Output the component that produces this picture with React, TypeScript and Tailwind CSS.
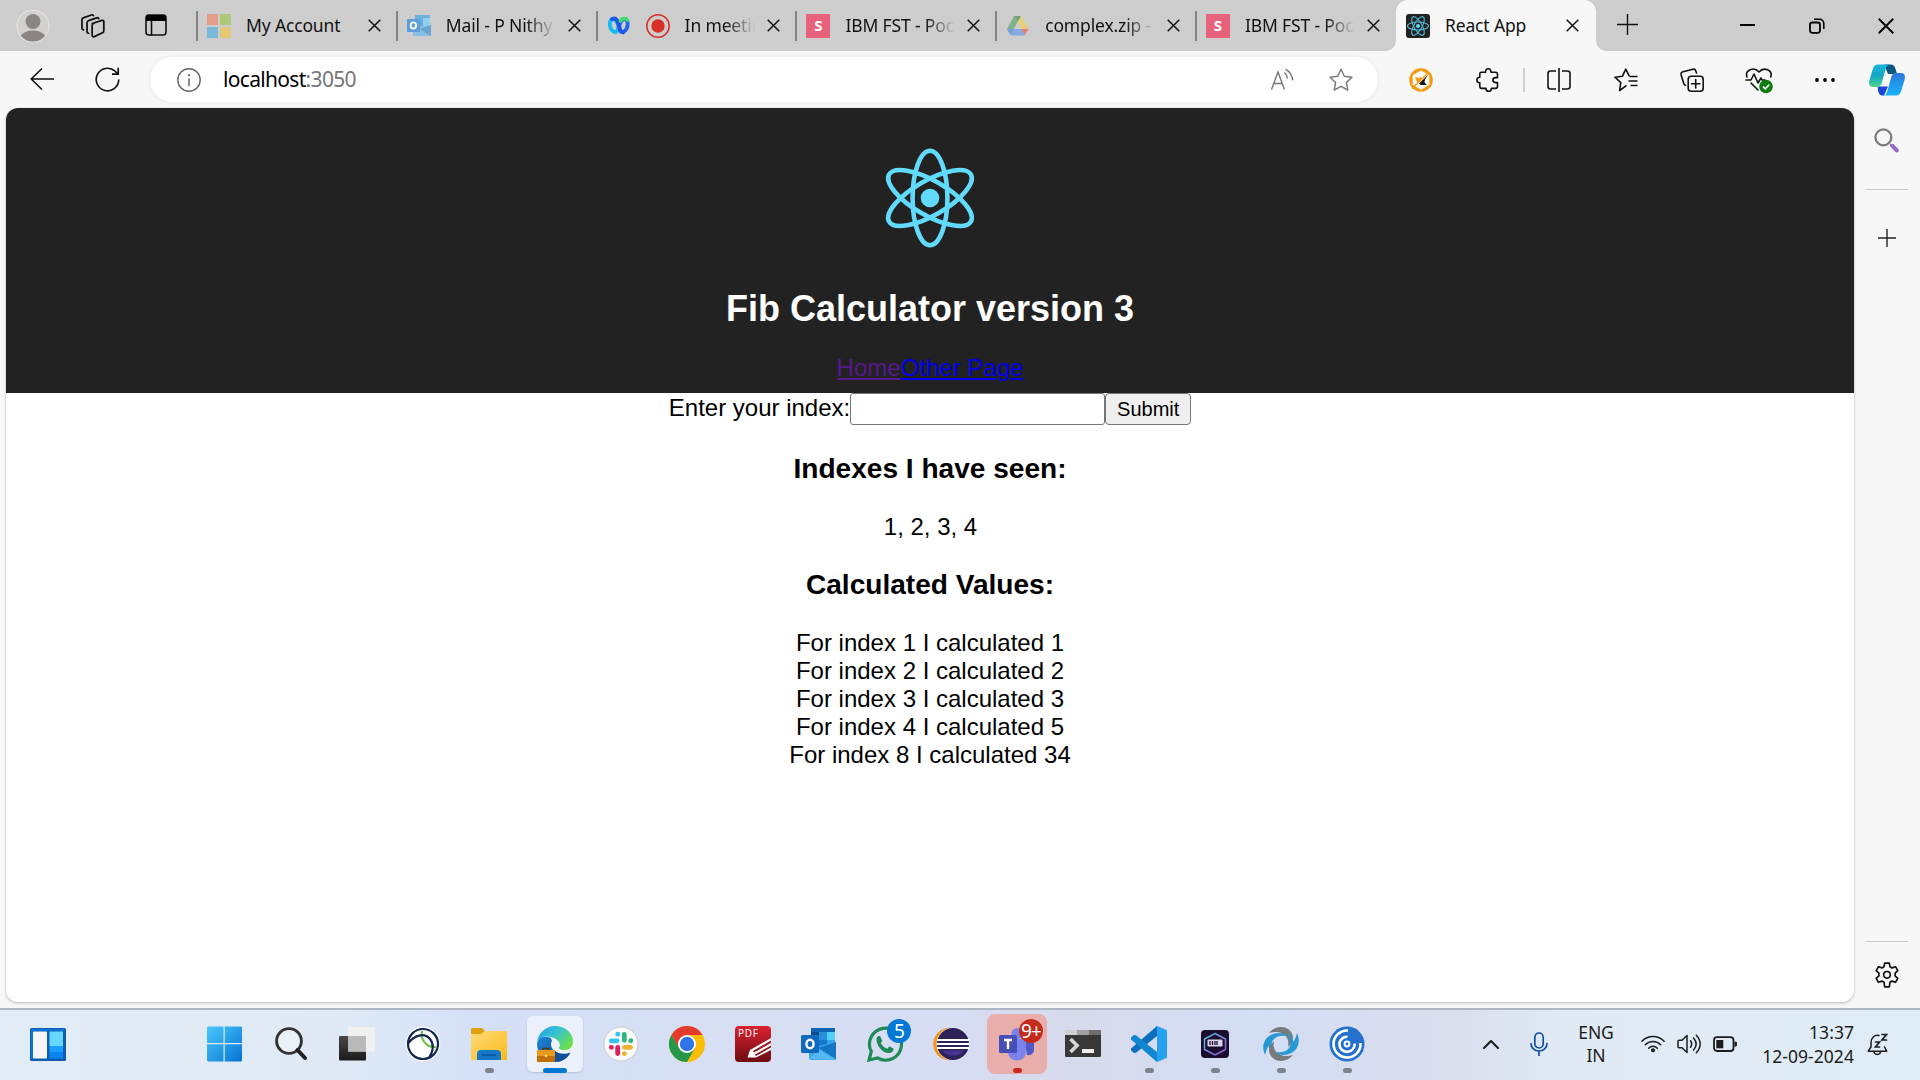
import React from "react";

const ui = { fill: "none", stroke: "#111", strokeWidth: 1.6, strokeLinecap: "round", strokeLinejoin: "round" } as const;

function Svg({ w = 24, h = w, box, children, ...rest }: any) {
  return (
    <svg width={w} height={h} viewBox={box || "0 0 24 24"} className="block shrink-0" {...rest}>
      {children}
    </svg>
  );
}

/* ---------- browser tab icons ---------- */

const MicrosoftIcon = () => (
  <Svg>
    <path d="M0 0h11v11H0z" fill="#e29c88" />
    <path d="M13 0h11v11H13z" fill="#adc776" />
    <path d="M0 13h11v11H0z" fill="#79badb" />
    <path d="M13 13h11v11H13z" fill="#e5c576" />
  </Svg>
);

const OutlookTabIcon = () => (
  <Svg>
    <path d="M8 1h15v7H8z" fill="#6fb1dc" />
    <path d="M8 6h8v7H8z" fill="#6ba6d6" />
    <path d="M16 4h7v9h-7z" fill="#8fd0ee" />
    <path d="M6 12l18 0v10H6z" fill="#86bfe4" />
    <path d="M24 11v11L12 15z" fill="#6aa5d2" />
    <rect y="5" width="13" height="13" rx="1" fill="#5b9fd6" />
    <ellipse cx="6.4" cy="11.4" rx="2.7" ry="3.1" fill="none" stroke="#fff" strokeWidth="1.8" />
  </Svg>
);

const WebexIcon = () => (
  <Svg>
    <ellipse cx="7" cy="11.5" rx="4" ry="6.6" transform="rotate(-14 7 11.5)" fill="none" stroke="#16b9f2" strokeWidth="3.8" />
    <ellipse cx="16.5" cy="11.5" rx="4" ry="6.6" transform="rotate(14 16.5 11.5)" fill="none" stroke="#2463ee" strokeWidth="3.8" />
    <path d="M5 5c5-2 6 3 7 7 1 4 2 6 4 6.500" fill="none" stroke="#1d55e6" strokeWidth="3.8" strokeLinecap="round" />
    <path d="M13.500 7c1-2.500 5-3.500 7-1" fill="none" stroke="#3fdc6b" strokeWidth="3.6" strokeLinecap="round" />
  </Svg>
);

const RecordIcon = () => (
  <Svg>
    <circle cx="12" cy="12" r="11.200" fill="none" stroke="#d93025" strokeWidth="1.5" />
    <circle cx="12" cy="12" r="6.700" fill="#d93025" />
  </Svg>
);

const SIcon = () => (
  <span className="flex size-6 items-center justify-center bg-[#e8627c] font-['Open_Sans',sans-serif] text-[15px] leading-none font-bold text-white">S</span>
);

const DriveIcon = () => (
  <Svg>
    <path d="M8 2h7l-3.500 6.200-6.500 13L1 15z" fill="#7fb38c" />
    <path d="M8 2h7l7.500 13h-7.200z" fill="#e6cf7c" />
    <path d="M8 2h7l-3.500 6z" fill="#6fa27c" />
    <path d="M8.400 15h14.100l-4 6.500H5z" fill="#88a9e2" />
    <path d="M15.300 15h7.200l-3.800 6z" fill="#df7f78" />
    <path d="M8.400 15L1 15l4 6.500z" fill="#799fe0" />
    <path d="M11.500 8.200L15.300 15H7.800z" fill="#cdcdcd" />
  </Svg>
);

const ReactTabIcon = () => (
  <Svg>
    <rect width="24" height="24" rx="3" fill="#222" />
    <g fill="none" stroke="#53b9d6" strokeWidth="1.1">
      <ellipse cx="12" cy="12" rx="10.500" ry="4" />
      <ellipse cx="12" cy="12" rx="10.500" ry="4" transform="rotate(60 12 12)" />
      <ellipse cx="12" cy="12" rx="10.500" ry="4" transform="rotate(120 12 12)" />
    </g>
    <circle cx="12" cy="12" r="2" fill="#61dafb" />
  </Svg>
);

const CloseX = ({ s = 13 }: { s?: number }) => (
  <Svg w={s} box="0 0 13 13">
    <path d="M.7.7l11.600 11.600M12.300.7L.7 12.300" stroke="#111" strokeWidth="1.5" fill="none" />
  </Svg>
);

type TabData = { title: string; icons: React.ReactNode[]; fade?: boolean };

const tabs: TabData[] = [
  { title: "My Account", icons: [<MicrosoftIcon key="a" />] },
  { title: "Mail - P Nithy", icons: [<OutlookTabIcon key="a" />], fade: true },
  { title: "In meetin", icons: [<WebexIcon key="a" />, <RecordIcon key="b" />], fade: true },
  { title: "IBM FST - Poc", icons: [<SIcon key="a" />], fade: true },
  { title: "complex.zip -", icons: [<DriveIcon key="a" />], fade: true },
  { title: "IBM FST - Poc", icons: [<SIcon key="a" />], fade: true },
];

function Tab({ title, icons, fade }: TabData) {
  return (
    <div className="flex h-[51px] w-[199.800px] shrink-0 items-center">
      <div className="h-[30px] w-[2px] bg-[#858585]" />
      <div className="ml-[9px] flex shrink-0 gap-[15px]">{icons}</div>
      <div
        className={`ml-[15px] h-[30px] min-w-0 flex-1 text-[17.500px] leading-[28px] tracking-[-0.15px] whitespace-nowrap ${
          fade ? "[mask-image:linear-gradient(to_right,black_calc(100%_-_30px),transparent)]" : ""
        }`}
      >
        {title}
      </div>
      <div className="ml-[12px] flex w-[28px] shrink-0">
        <CloseX />
      </div>
    </div>
  );
}

function TabStrip() {
  return (
    <div className="flex h-[51px] items-center bg-[#cdcdcd]">
      <div className="flex w-[66px] justify-center">
        <Svg w={34} box="0 0 34 34">
          <defs>
            <clipPath id="avatar">
              <circle cx="17" cy="17" r="15.500" />
            </clipPath>
          </defs>
          <circle cx="17" cy="17" r="16" fill="#d3d1cf" stroke="#e4e2e0" strokeWidth="1.2" />
          <g clipPath="url(#avatar)" fill="#8a8582">
            <circle cx="17" cy="12.500" r="7.500" />
            <ellipse cx="17" cy="30" rx="13" ry="8.500" />
          </g>
        </Svg>
      </div>
      <div className="flex w-[54px] justify-center">
        <Svg w={26}>
          <g {...ui}>
            <path d="M11.300 9.700l8.900-2.900c1-.3 1.800.3 1.800 1.300v8.200c0 .9-.4 1.500-1.200 1.900l-7.600 3.600c-1.100.5-2-.1-2-1.200v-9c0-.9.500-1.600 1.300-1.900z" />
            <path d="M8 18.800c-1.100 0-1.500-.5-1.500-1.500V8.900c0-.9.500-1.500 1.300-1.800l7.700-2.600c.8-.3 1.500 0 1.800.7" />
            <path d="M3.300 15.500c-1 0-1.500-.5-1.500-1.400V6.300c0-.9.400-1.500 1.200-1.800l7.500-2.700c.8-.3 1.500 0 1.900.6" />
          </g>
        </Svg>
      </div>
      <div className="flex w-[72px] justify-center pb-px">
        <Svg w={22} box="0 0 22 22">
          <rect x="1" y="1" width="20" height="20" rx="3" {...ui} />
          <path d="M1 7V4a3 3 0 013-3h14a3 3 0 013 3v3z" fill="#000" />
          <path d="M6.500 7v14" {...ui} />
        </Svg>
      </div>
      <div className="ml-[4px] flex">
        {tabs.map((t, i) => (
          <Tab key={i} {...t} />
        ))}
      </div>
      <div className="relative ml-[1.200px] flex h-[51px] w-[200px] shrink-0 items-center rounded-t-[12px] bg-[#f7f7f7] before:absolute before:bottom-0 before:-left-[10px] before:size-[10px] before:bg-[radial-gradient(circle_at_0_0,transparent_9.500px,#f7f7f7_10px)] after:absolute after:-right-[10px] after:bottom-0 after:size-[10px] after:bg-[radial-gradient(circle_at_100%_0,transparent_9.500px,#f7f7f7_10px)]">
        <div className="ml-[10px]">
          <ReactTabIcon />
        </div>
        <div className="ml-[15px] h-[30px] w-[115px] text-[17.500px] leading-[28px] tracking-[-0.15px] whitespace-nowrap">React App</div>
        <div className="ml-[6px]">
          <CloseX />
        </div>
      </div>
      <div className="flex w-[64px] justify-center pb-[2px]">
        <Svg w={21} box="0 0 21 21">
          <path d="M10.500 0v21M0 10.500h21" stroke="#111" strokeWidth="1.4" />
        </Svg>
      </div>
      <div className="ml-auto flex items-center">
        <div className="flex w-[69px] justify-center">
          <div className="mb-px h-[2px] w-[15px] bg-black" />
        </div>
        <div className="flex w-[69px] justify-center">
          <Svg w={16} box="0 0 16 16">
            <rect x="1" y="4.500" width="10" height="10.300" rx="2.200" fill="none" stroke="#000" strokeWidth="1.800" />
            <path d="M5 1.300h5.500a4.300 4.300 0 014.300 4.300V11" fill="none" stroke="#000" strokeWidth="1.600" />
          </Svg>
        </div>
        <div className="flex w-[69px] justify-center">
          <Svg w={16} box="0 0 13 13">
            <path d="M.6.6l11.800 11.800M12.400.6L.6 12.400" stroke="#000" strokeWidth="1.500" />
          </Svg>
        </div>
      </div>
    </div>
  );
}

/* ---------- toolbar ---------- */

function Toolbar() {
  return (
    <div className="flex h-[57px] items-center bg-[#f7f7f7] pl-[9px]">
      <div className="flex w-[66px] justify-center pb-px">
        <Svg>
          <path d="M12 1.500L1.200 12 12 22.500M1.200 12H24" {...ui} strokeLinecap="butt" />
        </Svg>
      </div>
      <div className="flex w-[65px] justify-center pb-px">
        <Svg w={25}>
          <path d="M22.800 12A10.800 10.800 0 1119 3.800l3 2.700M22.300.8v6h-6" {...ui} strokeLinecap="butt" strokeLinejoin="miter" />
        </Svg>
      </div>
      <div className="ml-[10px] flex h-[45px] w-[1228px] shrink-0 items-center rounded-full bg-white pl-[27px] shadow-[0_0_5px_rgba(0,0,0,0.08)]">
        <Svg>
          <circle cx="12" cy="12" r="11.200" fill="none" stroke="#666" strokeWidth="1.4" />
          <path d="M12 10.500v7.500" stroke="#666" strokeWidth="1.500" />
          <circle cx="12" cy="7.200" r="1.100" fill="#666" />
        </Svg>
        <div className="mb-px ml-[22px] text-[21px] leading-[30px] tracking-[-0.680px] text-black">
          localhost<span className="text-[#767676]">:3050</span>
        </div>
        <div className="ml-auto flex items-center gap-[35px] pr-[25px]">
          <Svg>
            <g fill="none" stroke="#767676" strokeWidth="1.400">
              <path d="M1.500 21.500L8 4l6.500 17.500M3.800 15.500h8.400" />
              <path d="M14.500 4.500c1.700 1.600 2.700 3.800 2.900 6.300M15.500 1.200c4 2.200 6.700 6.400 7.200 11.300" />
            </g>
          </Svg>
          <Svg>
            <path d="M12 1.200l3.300 7 7.700 1-5.600 5.300 1.400 7.600-6.800-3.700-6.800 3.700 1.400-7.600L1 9.200l7.700-1z" fill="none" stroke="#767676" strokeWidth="1.400" strokeLinejoin="round" />
          </Svg>
        </div>
      </div>
      <div className="ml-[10px] flex w-[66px] justify-center">
        <Svg>
          <circle cx="12" cy="12" r="11.800" fill="#f59a0c" />
          <path d="M12 2.600l8.300 4.600v9.600L12 21.800l-8.300-5V7.200z" fill="#fff" />
          <path d="M6 9l3.500 1L12 9l1 2-4 4-1.500-2z" fill="#f59a0c" />
          <path d="M3 20.500L18.500 5.500" stroke="#f59a0c" strokeWidth="1.400" />
          <path d="M19.500 6.500L10 15.500l2 1.500h6l-2.500-2.500.5-3z" fill="#111" />
        </Svg>
      </div>
      <div className="flex w-[67px] justify-center">
        <Svg>
          <path
            d="M5.300 4.200h4.200C9.300 2 10.600.8 12.200.8s3 1.200 2.700 3.400h4.500c1.200 0 2.100.9 2.100 2.100v3.300h-1.700c-1.800 0-2.900 1.100-2.900 2.500s1.100 2.500 2.900 2.500h1.700v3.700c0 1.200-.9 2.100-2.100 2.100h-4c0 1.800-1.200 2.800-2.700 2.800s-2.700-1-2.700-2.800H5.900c-1.200 0-2.100-.9-2.100-2.100v-3.600C2 14.700.9 13.500.9 12s1.100-2.700 2.900-2.700V5.700c0-.9.600-1.500 1.500-1.500z"
            {...ui}
          />
        </Svg>
      </div>
      <div className="ml-[2px] h-6 w-[2px] bg-[#d0d0d0]" />
      <div className="ml-px flex w-[66px] justify-center">
        <Svg>
          <g {...ui} strokeLinecap="butt">
            <path d="M12 0v24M9 3H3.500C2 3 1 4 1 5.500v13C1 20 2 21 3.500 21H9M15 3h5.500C22 3 23 4 23 5.500v13c0 1.500-1 2.500-2.500 2.500H15" />
          </g>
        </Svg>
      </div>
      <div className="flex w-[67px] justify-center">
        <Svg>
          <g {...ui}>
            <path d="M12 17.800L5.600 22.500l1.200-7.900L.9 9.200l7.600-1L11.800 1.200l3.300 6.600" />
            <path d="M15.500 8.500h8M14.500 13h9M16.500 17.500h7" strokeLinecap="butt" />
          </g>
        </Svg>
      </div>
      <div className="flex w-[66px] justify-center">
        <Svg>
          <g {...ui}>
            <rect x="8.200" y="8.200" width="15" height="15" rx="3" />
            <path d="M15.700 11.500v8.400M11.500 15.700h8.400" />
            <path d="M16.500 5l-.8-2.300c-.4-1.200-1.500-1.800-2.700-1.500L3 3.800C1.500 4.200.7 5.400 1.100 6.900l2.800 8.800c.3.900.8 1.400 1.600 1.600" />
          </g>
        </Svg>
      </div>
      <div className="flex w-[67px] justify-center">
        <Svg w={28} box="0 0 28 28">
          <g {...ui}>
            <path d="M2 11C-.5 4 9 .2 14 6c5-5.800 14-1.800 11.700 5M6 17l7 7" />
            <path d="M1 14h5l3-6 4 9 3-5 1 2h3" />
          </g>
          <circle cx="21" cy="20.500" r="6.800" fill="#107c10" />
          <path d="M18 20.700l2.300 2.200 4-4.300" fill="none" stroke="#fff" strokeWidth="1.600" />
        </Svg>
      </div>
      <div className="flex w-[65px] justify-center">
        <Svg w={20} h={4} box="0 0 20 4">
          <circle cx="2" cy="2" r="1.900" />
          <circle cx="10" cy="2" r="1.900" />
          <circle cx="18" cy="2" r="1.900" />
        </Svg>
      </div>
      <div className="flex w-[60px] justify-center">
        <Svg w={36} h={32} box="0 0 36 32">
          <defs>
            <linearGradient id="cpA" x1="0" y1="0" x2="0" y2="1">
              <stop offset="0" stopColor="#19b5dc" />
              <stop offset=".5" stopColor="#12a5c2" />
              <stop offset="1" stopColor="#4fd68d" />
            </linearGradient>
            <linearGradient id="cpB" x1="0" y1="0" x2="0" y2="1">
              <stop offset="0" stopColor="#2c78dc" />
              <stop offset="1" stopColor="#19b4fb" />
            </linearGradient>
          </defs>
          <path d="M15 .5h6.500c3 0 4.200 1.500 5 4.500l1.500 5h-9z" fill="#0b567f" />
          <path d="M8.500 22.500h10.500l-4 9h-1.500c-2.500 0-3.500-1.500-4.200-4z" fill="#1b45d8" />
          <path d="M9 .5h12c-2.500 0-3.500 1.500-4.500 5L13 18c-1 3.500-2 5-5 5H4c-4 0-4.500-3-3.500-7L4 4.500C5 2 6.500.5 9 .5z" fill="url(#cpA)" />
          <path d="M27 31.500H14c2.500 0 3.500-1.500 4.500-5L22 14c1-3.500 2-5 5-5h5c4 0 4.500 3 3.500 7L32 27.500c-1 2.500-2.500 4-5 4z" fill="url(#cpB)" />
        </Svg>
      </div>
    </div>
  );
}

/* ---------- page ---------- */

const calculated = [
  [1, 1],
  [2, 2],
  [3, 3],
  [4, 5],
  [8, 34],
];

function Page() {
  return (
    <div className="ml-[6px] h-[894px] w-[1848px] overflow-hidden rounded-[12px] bg-white text-center font-['Liberation_Sans',Arial,sans-serif] text-[24px] leading-[28px] text-black shadow-[0_1px_3px_rgba(0,0,0,0.25)]">
      <div className="flex h-[285px] flex-col items-center bg-[#222] pt-[30px]">
        <svg width="120" height="120" viewBox="-60 -60 120 120" className="shrink-0">
          <g fill="none" stroke="#61dafb" strokeWidth="4.600">
            <ellipse rx="17.400" ry="47.200" />
            <ellipse rx="17.400" ry="47.200" transform="rotate(60)" />
            <ellipse rx="17.400" ry="47.200" transform="rotate(120)" />
          </g>
          <circle r="9.300" fill="#61dafb" />
        </svg>
        <h1 className="mt-[30px] text-[36px] leading-[41px] font-bold text-white">Fib Calculator version 3</h1>
        <div className="mt-[25px] underline decoration-[2px] underline-offset-[2px]">
          <a className="text-[#551a8b]">Home</a>
          <a className="text-[#0000ee]">Other Page</a>
        </div>
      </div>
      <div className="flex h-[32px] justify-center">
        <label className="pt-px">Enter your index:</label>
        <input className="h-[32px] w-[255px] rounded-[3px] border-[1.500px] border-[#767676] bg-white" />
        <button className="h-[32px] w-[86px] rounded-[4px] border-[1.500px] border-[#767676] bg-[#efefef] text-[20px] leading-[28px]">Submit</button>
      </div>
      <h3 className="mt-[28px] text-[28.080px] leading-[32px] font-bold">Indexes I have seen:</h3>
      <div className="mt-[28px] pl-px">1, 2, 3, 4</div>
      <h3 className="mt-[28px] text-[28.080px] leading-[32px] font-bold">Calculated Values:</h3>
      <div className="mt-[28px]">
        {calculated.map(([i, v]) => (
          <div key={i}>
            For index {i} I calculated {v}
          </div>
        ))}
      </div>
    </div>
  );
}

function Sidebar() {
  return (
    <div className="flex h-[900px] flex-1 flex-col items-center">
      <div className="mt-[20px] mr-[2px]">
        <Svg w={25}>
          <path d="M15.500 15.500l3 3" stroke="#777" strokeWidth="2" />
          <circle cx="9" cy="9" r="7.600" fill="#f4f6f8" stroke="#7c7c7c" strokeWidth="2.200" />
          <path d="M17.800 17.300l4 4.200" stroke="#9a6bc9" strokeWidth="4" strokeLinecap="round" />
        </Svg>
      </div>
      <div className="mt-[36px] h-px w-[42px] bg-[#c8c8c8]" />
      <div className="mt-[39px] mr-px">
        <Svg w={18} box="0 0 18 18">
          <path d="M9 0v18M0 9h18" stroke="#222" strokeWidth="1.400" />
        </Svg>
      </div>
      <div className="mt-auto h-px w-[42px] bg-[#c8c8c8]" />
      <div className="mt-[20px] mb-[20px]">
        <Svg w={26} box="0 0 26 26">
          <path
            d="M10.700 1.200h4.600l.7 3.600 2 1.100 3.500-1.200 2.300 4-2.700 2.500v2.600l2.700 2.500-2.300 4L18 19.100l-2 1.100-.7 4.600h-4.600l-.7-4.600-2-1.100-3.500 1.200-2.300-4 2.700-2.500v-2.600L2.200 8.700l2.300-4L8 5.900l2-1.100z"
            {...ui}
            strokeWidth="1.700"
          />
          <circle cx="13" cy="12.800" r="3.300" {...ui} />
        </Svg>
      </div>
    </div>
  );
}

/* ---------- taskbar ---------- */

const b36 = "0 0 36 36";

const StartIcon = () => (
  <Svg w={36} box={b36}>
    <defs>
      <linearGradient id="win" gradientUnits="userSpaceOnUse" x1="0" y1="0" x2="36" y2="36">
        <stop offset="0" stopColor="#4cc9fd" />
        <stop offset="1" stopColor="#0272d2" />
      </linearGradient>
    </defs>
    <path d="M1 .5H16.500v16.500H0V1.500zM17.700.5h16.300l1 1V17H17.700zM0 18.200H16.500v17.300H1l-1-1zM17.700 18.200h17.300v16.300l-1 1H17.700z" fill="url(#win)" />
  </Svg>
);

const SearchIcon = () => (
  <Svg w={36} box={b36}>
    <circle cx="16" cy="15" r="12.400" fill="rgba(255,255,255,.35)" stroke="#333" strokeWidth="2.900" />
    <path d="M24.500 24l7.500 8" stroke="#222" strokeWidth="4" strokeLinecap="round" />
  </Svg>
);

const TaskViewIcon = () => (
  <Svg w={36} box={b36}>
    <defs>
      <linearGradient id="tv" x1="0" y1="0" x2="0" y2="1">
        <stop offset="0" stopColor="#484848" />
        <stop offset="1" stopColor="#1a1a1a" />
      </linearGradient>
    </defs>
    <rect x="0" y="10" width="27" height="24.500" rx="1" fill="url(#tv)" />
    <rect x="9" y="1" width="27" height="24.500" rx="1" fill="#f1f1f1" />
    <path d="M9 10h18v15.500H9z" fill="#b9b9b9" />
  </Svg>
);

const CiscoIcon = () => (
  <Svg w={36} box={b36}>
    <circle cx="18" cy="18" r="17.300" fill="#fff" />
    <path d="M17 5c-2 9 5 17 14 16" fill="none" stroke="#6cc04a" strokeWidth="2" />
    <circle cx="18" cy="18" r="15" fill="none" stroke="#12294f" strokeWidth="2.200" />
    <path d="M3.500 17C9 9.500 19 6 25 13c5 6 2 14-1 19" fill="none" stroke="#12294f" strokeWidth="2.200" />
  </Svg>
);

const ExplorerIcon = () => (
  <Svg w={36} box={b36}>
    <defs>
      <linearGradient id="fold" x1="0" y1="0" x2="1" y2="1">
        <stop offset="0" stopColor="#ffdc78" />
        <stop offset="1" stopColor="#fbb91a" />
      </linearGradient>
    </defs>
    <path d="M1.500 2H11l3.500 3.500L11 12H0V3.500C0 2.500.5 2 1.500 2z" fill="#dfa010" />
    <path d="M0 8h10l4-3h20.500c1 0 1.500.5 1.500 1.500V34H1.500c-1 0-1.500-.5-1.500-1.500z" fill="url(#fold)" />
    <path d="M6 34v-6c0-2.500 1.500-4 4-4h16c2.500 0 4 1.500 4 4v6z" fill="#1477c7" />
    <path d="M11 29h14" stroke="#0b4f92" strokeWidth="1.500" />
  </Svg>
);

const EdgeIcon = () => (
  <Svg w={36} box={b36}>
    <defs>
      <linearGradient id="edA" x1="0" y1="0" x2="1" y2=".6">
        <stop offset="0" stopColor="#1f9be0" />
        <stop offset=".5" stopColor="#35c1d6" />
        <stop offset="1" stopColor="#6ae04c" />
      </linearGradient>
      <linearGradient id="edB" x1="0" y1="0" x2="1" y2="1">
        <stop offset="0" stopColor="#1a86d8" />
        <stop offset="1" stopColor="#10498f" />
      </linearGradient>
    </defs>
    <path d="M0 18c0 10 8 18 18 18 6.500 0 12-3 15.500-9-5 2.500-12 2-15-2L14 12C6 9 1 12 0 18z" fill="url(#edB)" />
    <path d="M0 16C1 7 9 0 18 0c10 0 18 6.500 18 15.500 0 5.500-4 9-9 9-4 0-5.500-1.500-5-3 1.500-2 1-6.500-4-9C11 9 3 10 0 16z" fill="url(#edA)" />
    <path d="M14 18c0-3 2-5 4.500-4.500 4 1.500 4.500 5 3.500 7-.5 1.500.5 3 3 3.500l8 .5c-2 2-7 3.500-11 2.500-5-1-8-5-8-9z" fill="#eef2fa" />
    <path d="M17 24c4 4 11 5 16 2.500C29 33 24 36 17 36z" fill="#124f99" />
    <rect y="24" width="18" height="12" rx="1" fill="#c26f08" />
    <path d="M0 24h18v6H0z" fill="#e79a1d" />
    <path d="M6 24v-1.500h6V24" fill="none" stroke="#5c3604" strokeWidth="1.500" />
    <circle cx="9" cy="30" r="1.300" fill="#ffe65a" />
  </Svg>
);

const SlackIcon = () => (
  <Svg w={36} box={b36}>
    <circle cx="18" cy="18" r="17" fill="#fafafa" stroke="#c9c9c9" />
    <g strokeWidth="4.800" strokeLinecap="round">
      <path d="M8.300 14.800h5.900M14.600 8.200h.3" stroke="#36c5f0" />
      <path d="M21.300 8.300v6M27.700 14.700h.1" stroke="#2eb67d" />
      <path d="M14.700 21.500v6M8.300 21.300h.1" stroke="#e01e5a" />
      <path d="M21.500 21.300h6M21.300 27.700h.1" stroke="#ecb22e" />
    </g>
  </Svg>
);

const ChromeIcon = () => (
  <Svg w={36} box={b36}>
    <circle cx="18" cy="18" r="18" fill="#fbbc05" />
    <path d="M18 9h15.600A18 18 0 002.400 9l7.800 13.500z" fill="#e33b2e" />
    <path d="M2.400 9A18 18 0 0018 36l7.800-13.500L18 18l-7.800 4.500z" fill="#279847" />
    <circle cx="18" cy="18" r="9" fill="#fff" />
    <circle cx="18" cy="18" r="7.200" fill="#2f74e8" />
  </Svg>
);

const PdfIcon = () => (
  <Svg w={36} box={b36}>
    <defs>
      <linearGradient id="pdf" x1="0" y1="0" x2="0" y2="1">
        <stop offset="0" stopColor="#dc2130" />
        <stop offset="1" stopColor="#6d0d12" />
      </linearGradient>
    </defs>
    <rect width="36" height="36" rx="4" fill="url(#pdf)" />
    <text x="3" y="11" fontSize="10" fill="#fff" fontFamily="Open Sans" textLength="20">
      PDF
    </text>
    <path d="M12.500 31.500l2.500-7.500L36 12v2.500L18 25l1 1.500L36 17v2.500L20 28.500l.8 1.500L36 21.500V24L21 31.500z" fill="#fff" />
  </Svg>
);

const OutlookIcon = () => (
  <Svg w={36} box={b36}>
    <path d="M10 2h24v16H10z" fill="#0f64b5" />
    <path d="M10 6h8v8h-8z" fill="#0d4f94" />
    <path d="M18 6h8v8h-8z" fill="#2b8fdc" />
    <path d="M26 6h8v8h-8z" fill="#50d0f7" />
    <path d="M18 14h8v8h-8z" fill="#1878cc" />
    <path d="M26 14h8v8h-8z" fill="#2fa4e8" />
    <path d="M8 22l27-6v18H10c-1 0-2-1-2-2z" fill="#38a8ec" />
    <path d="M35 16v17L17 22z" fill="#1575c4" />
    <path d="M8 33l27 1-17-11z" fill="#53b8f2" />
    <rect y="9" width="18" height="18" rx="1.500" fill="#1069bd" />
    <ellipse cx="9" cy="18" rx="3.600" ry="4.200" fill="none" stroke="#fff" strokeWidth="2.400" />
  </Svg>
);

const WhatsAppIcon = () => (
  <Svg w={36} box={b36}>
    <path d="M2 34l2.300-8.500A16 16 0 1110.500 32z" fill="none" stroke="#1f8a56" strokeWidth="3.200" />
    <path d="M9.500 13.500c0-2 1-3.500 2.500-3.500 1 0 1.300.3 1.700 1.200l1.500 3.500c-.3 1.300-1.500 1.800-1.300 2.500 1.500 2.700 3.600 4.500 6.400 5.600.7-.3 1.300-2.300 2.200-2.200l4 2c.3 2.500-1.500 4.500-5 4.500C15 27 9.500 19 9.500 13.500z" fill="#1f8a56" />
  </Svg>
);

const EclipseIcon = () => (
  <Svg w={36} box={b36}>
    <circle cx="16.500" cy="18" r="16.300" fill="#f7941e" />
    <circle cx="20" cy="18" r="16.500" fill="#d9dff3" />
    <circle cx="20" cy="18" r="16" fill="#2c2255" />
    <path d="M9 24.500h22c-2 3-6 5-11 5s-9-2-11-5z" fill="#453591" />
    <path d="M4 14h32M4 18h32M4 22h32" stroke="#fff" strokeWidth="1.900" />
  </Svg>
);

const TeamsIcon = () => (
  <Svg w={36} box={b36}>
    <circle cx="29" cy="9" r="4" fill="#5059c9" />
    <circle cx="18" cy="7.500" r="5.500" fill="#7b83eb" />
    <path d="M25 12h10v12c0 3-3 6-7 5z" fill="#5059c9" />
    <path d="M9 13h18v12c0 6-4 9.500-9 9.500S9 31 9 25z" fill="#7b83eb" />
    <rect y="9" width="18" height="18" rx="1.500" fill="#464eb8" />
    <path d="M5 14h8M9 14v9" stroke="#fff" strokeWidth="2.400" />
  </Svg>
);

const TerminalIcon = () => (
  <Svg w={36} box={b36}>
    <rect y="4" width="36" height="27" rx="1.500" fill="#383838" />
    <path d="M0 9V5c0-.6.4-1 1-1h11v5z" fill="#cfcfcf" />
    <path d="M12 4h12v5H12z" fill="#a0a0a0" />
    <path d="M24 4h11c.6 0 1 .4 1 1v4H24z" fill="#6e6e6e" />
    <path d="M5.500 13l6.500 6.500L5.500 26" fill="none" stroke="#d6d6d6" strokeWidth="3.600" />
    <path d="M17 23h12v4H17z" fill="#eee" />
  </Svg>
);

const VsCodeIcon = () => (
  <Svg w={36} box={b36}>
    <path d="M26 0v10L5 26.800 3 27 0 24.500v-2z" fill="#0a6fbd" />
    <path d="M26 36V26L5 9.200 3 9 0 11.500v2z" fill="#1186d2" />
    <path d="M26 0l9 3.800c.6.300 1 .8 1 1.500v25.400c0 .7-.4 1.200-1 1.500L26 36l-1.500-.5L26 34V2L24.500.5z" fill="#27a2f0" />
  </Svg>
);

const PodIcon = () => (
  <Svg w={36} box={b36}>
    <defs>
      <linearGradient id="pod" x1="0" y1="0" x2="1" y2="1">
        <stop offset="0" stopColor="#52c2e8" />
        <stop offset="1" stopColor="#9b4fd8" />
      </linearGradient>
    </defs>
    <rect x="4" y="4" width="28" height="28" rx="4" fill="#1b0d2c" />
    <path d="M18 7.500l10.500 5.500v10.500L18 29 7.500 23.500V13z" fill="none" stroke="url(#pod)" strokeWidth="1.500" />
    <rect x="10.500" y="13.500" width="15" height="7" rx="1" fill="#dcd4ee" />
    <path d="M13 15v4M15.500 15v4M18 15v4M20 15v4" stroke="#1b0d2c" strokeWidth="1.300" />
  </Svg>
);

const SwirlIcon = () => (
  <Svg w={36} box={b36}>
    {[0, 180].map((a) => (
      <g key={a} transform={`rotate(${a} 18 18)`}>
        <path d="M6 7C13-2 28-1 30 11c0 5-3 8-5 10 1-6 0-10-5-13-4-2.500-9-2.500-14-1z" fill="#777b7c" />
        <path d="M2 29C-3 18 3 8 15 7c4 0 7 1 9 3-6-1-11 0-14 4-3 5-1 11 3 15-5-2-7-6-7.500-9C4 23 3 25 2 29z" fill="#2a98d2" />
      </g>
    ))}
  </Svg>
);

const CitrixIcon = () => (
  <Svg w={36} box={b36}>
    <circle cx="18" cy="18" r="17.500" fill="#2371cc" />
    <g fill="none" stroke="#fff" strokeWidth="2.600">
      <path d="M19 4.500A13.500 13.500 0 1031.500 17" />
      <path d="M18.500 10.700A7.600 7.600 0 1025.600 17.500" />
      <circle cx="18" cy="18" r="2.400" strokeWidth="2" />
    </g>
  </Svg>
);

type App = { icon: React.ReactNode; state?: "run" | "active" | "alert"; badge?: string };

const apps: App[] = [
  { icon: <StartIcon /> },
  { icon: <SearchIcon /> },
  { icon: <TaskViewIcon /> },
  { icon: <CiscoIcon /> },
  { icon: <ExplorerIcon />, state: "run" },
  { icon: <EdgeIcon />, state: "active" },
  { icon: <SlackIcon /> },
  { icon: <ChromeIcon /> },
  { icon: <PdfIcon /> },
  { icon: <OutlookIcon /> },
  { icon: <WhatsAppIcon />, badge: "5" },
  { icon: <EclipseIcon /> },
  { icon: <TeamsIcon />, state: "alert", badge: "9+" },
  { icon: <TerminalIcon /> },
  { icon: <VsCodeIcon />, state: "run" },
  { icon: <PodIcon />, state: "run" },
  { icon: <SwirlIcon />, state: "run" },
  { icon: <CitrixIcon />, state: "run" },
];

const tile = {
  none: "size-[56px]",
  run: "size-[56px]",
  active: "size-[56px] rounded-[6px] bg-[#ebf0fa] shadow-[0_1px_2px_rgba(0,0,0,0.15)]",
  alert: "size-[60px] rounded-[8px] bg-[#e9aeab]",
};
const bar = {
  none: "",
  run: "w-[9px] bg-[#7d828c]",
  active: "w-[24px] bg-[#0078d4]",
  alert: "w-[9px] bg-[#c42b1c]",
};

function TaskApp({ icon, state, badge }: App) {
  const s = state || "none";
  return (
    <div className="flex h-[68px] w-[66px] shrink-0 items-center justify-center">
      <div className={`relative flex items-center justify-center ${tile[s]}`}>
        {icon}
        {badge && (
          <span
            className={`absolute flex size-6 items-center justify-center rounded-full text-[19px] leading-none tracking-[-0.800px] text-white ${
              state === "alert" ? "top-[5px] right-[4px] bg-[#c42b1c]" : "top-[3px] right-[2px] bg-[#0078d4]"
            }`}
          >
            {badge}
          </span>
        )}
        {state && <span className={`absolute h-[5px] rounded-full ${state === "alert" ? "bottom-[1px]" : "bottom-[-1px]"} ${bar[s]}`} />}
      </div>
    </div>
  );
}

function Taskbar() {
  const line = { fill: "none", stroke: "#1c1c1c", strokeWidth: 1.6, strokeLinecap: "round", strokeLinejoin: "round" } as const;
  return (
    <div className="flex h-[72px] items-center border-t-2 border-[#aeb6c3] bg-[linear-gradient(90deg,#e1ecf6_0%,#e0eaf6_17%,#d3dff7_26%,#d7dff2_38%,#d6ddf4_48%,#d7daeb_56%,#d3def4_66%,#d9dced_74%,#e0eaf5_82%,#e0ecf6_100%)] pb-[2px] text-[#1c1c1c]">
      <div className="ml-[30px]">
        <Svg w={36} h={33} box="0 0 36 33">
          <rect width="36" height="33" rx="1.500" fill="#0f5db0" />
          <path d="M1 1h34l-1 2H3v27l-2 2z" fill="#0c74d4" />
          <rect x="3" y="3.500" width="14" height="27" rx="1" fill="#f5f5f5" />
          <path d="M19.500 3.500H33V18H19.500z" fill="#66d8ff" />
          <path d="M19.500 18H33v6H19.500z" fill="#1a9dff" />
          <path d="M19.500 24H33v6.500H19.500z" fill="#0a84f0" />
        </Svg>
      </div>
      <div className="ml-[126px] flex">
        {apps.map((a, i) => (
          <TaskApp key={i} {...a} />
        ))}
      </div>
      <div className="ml-[103px] flex w-4 justify-center">
        <Svg w={16} h={9} box="0 0 16 9">
          <path d="M1 8l7-7 7 7" {...line} strokeWidth="2" />
        </Svg>
      </div>
      <div className="ml-[31px]">
        <Svg w={18} h={24} box="0 0 18 24">
          <g {...line} stroke="#0f4fa3" strokeWidth="1.700">
            <rect x="4.800" y="1" width="8.400" height="15" rx="4.200" />
            <path d="M1 11.500c0 4.500 3.500 7.500 8 7.500s8-3 8-7.500M9 19v4.500" />
          </g>
        </Svg>
      </div>
      <div className="ml-[26px] w-[44px] text-center text-[17.500px] leading-[23px] tracking-[-0.1px]">
        ENG
        <br />
        IN
      </div>
      <div className="ml-[23px] flex gap-3">
        <Svg>
          <g {...line} strokeWidth="1.500">
            <path d="M.9 9.200c6-6.400 16.200-6.400 22.200 0M4.300 12.800c4.200-4.400 11.200-4.400 15.400 0M7.700 16.200c2.300-2.500 6.300-2.500 8.600 0" />
          </g>
          <circle cx="12" cy="18.300" r="2" fill="#1c1c1c" />
        </Svg>
        <Svg>
          <g {...line} strokeWidth="1.500">
            <path d="M1 9.200v5.600c0 .6.400 1 1 1h3l5 4.700V3.500L5 8.200H2c-.6 0-1 .4-1 1zM13.500 8.800c1.500 2 1.500 4.400 0 6.400M16.500 6c3.300 3.700 3.300 8.300 0 12M19.300 3.200c5.100 5.300 5.100 12.300 0 17.600" />
          </g>
        </Svg>
        <Svg>
          <rect x="1" y="5.200" width="19.500" height="13.800" rx="3" {...line} strokeWidth="1.800" />
          <path d="M3.300 8h7v8.300h-7z" fill="#1c1c1c" />
          <path d="M21.500 9.500c2.500 0 2.500.8 2.500 2.500s0 2.700-2.500 2.700z" fill="#1c1c1c" />
        </Svg>
      </div>
      <div className="ml-[13px] w-[104px] text-right text-[17.500px] leading-[24px] tracking-[0.050px] whitespace-nowrap">
        13:37
        <br />
        12-09-2024
      </div>
      <div className="ml-[13px]">
        <Svg w={22} h={24} box="0 0 22 24">
          <g {...line} strokeWidth="1.500">
            <path d="M12 3.500C7.500 2.500 4 6 4 10.500V15l-2.800 4.200h18.500L17.500 15" />
            <path d="M7 20c.5 3.200 6 3.200 6.500 0" />
            <path d="M8.500 10h4l-4 5h4M15 2.500h4.500L15 8h4.500" strokeLinejoin="miter" strokeWidth="1.700" />
          </g>
        </Svg>
      </div>
    </div>
  );
}

export default function App() {
  return (
    <div className="h-[1080px] w-[1920px] overflow-hidden bg-[#f7f7f7] font-['Noto_Sans','Open_Sans',sans-serif] text-[#111]">
      <TabStrip />
      <Toolbar />
      <div className="flex h-[900px]">
        <Page />
        <Sidebar />
      </div>
      <Taskbar />
    </div>
  );
}
